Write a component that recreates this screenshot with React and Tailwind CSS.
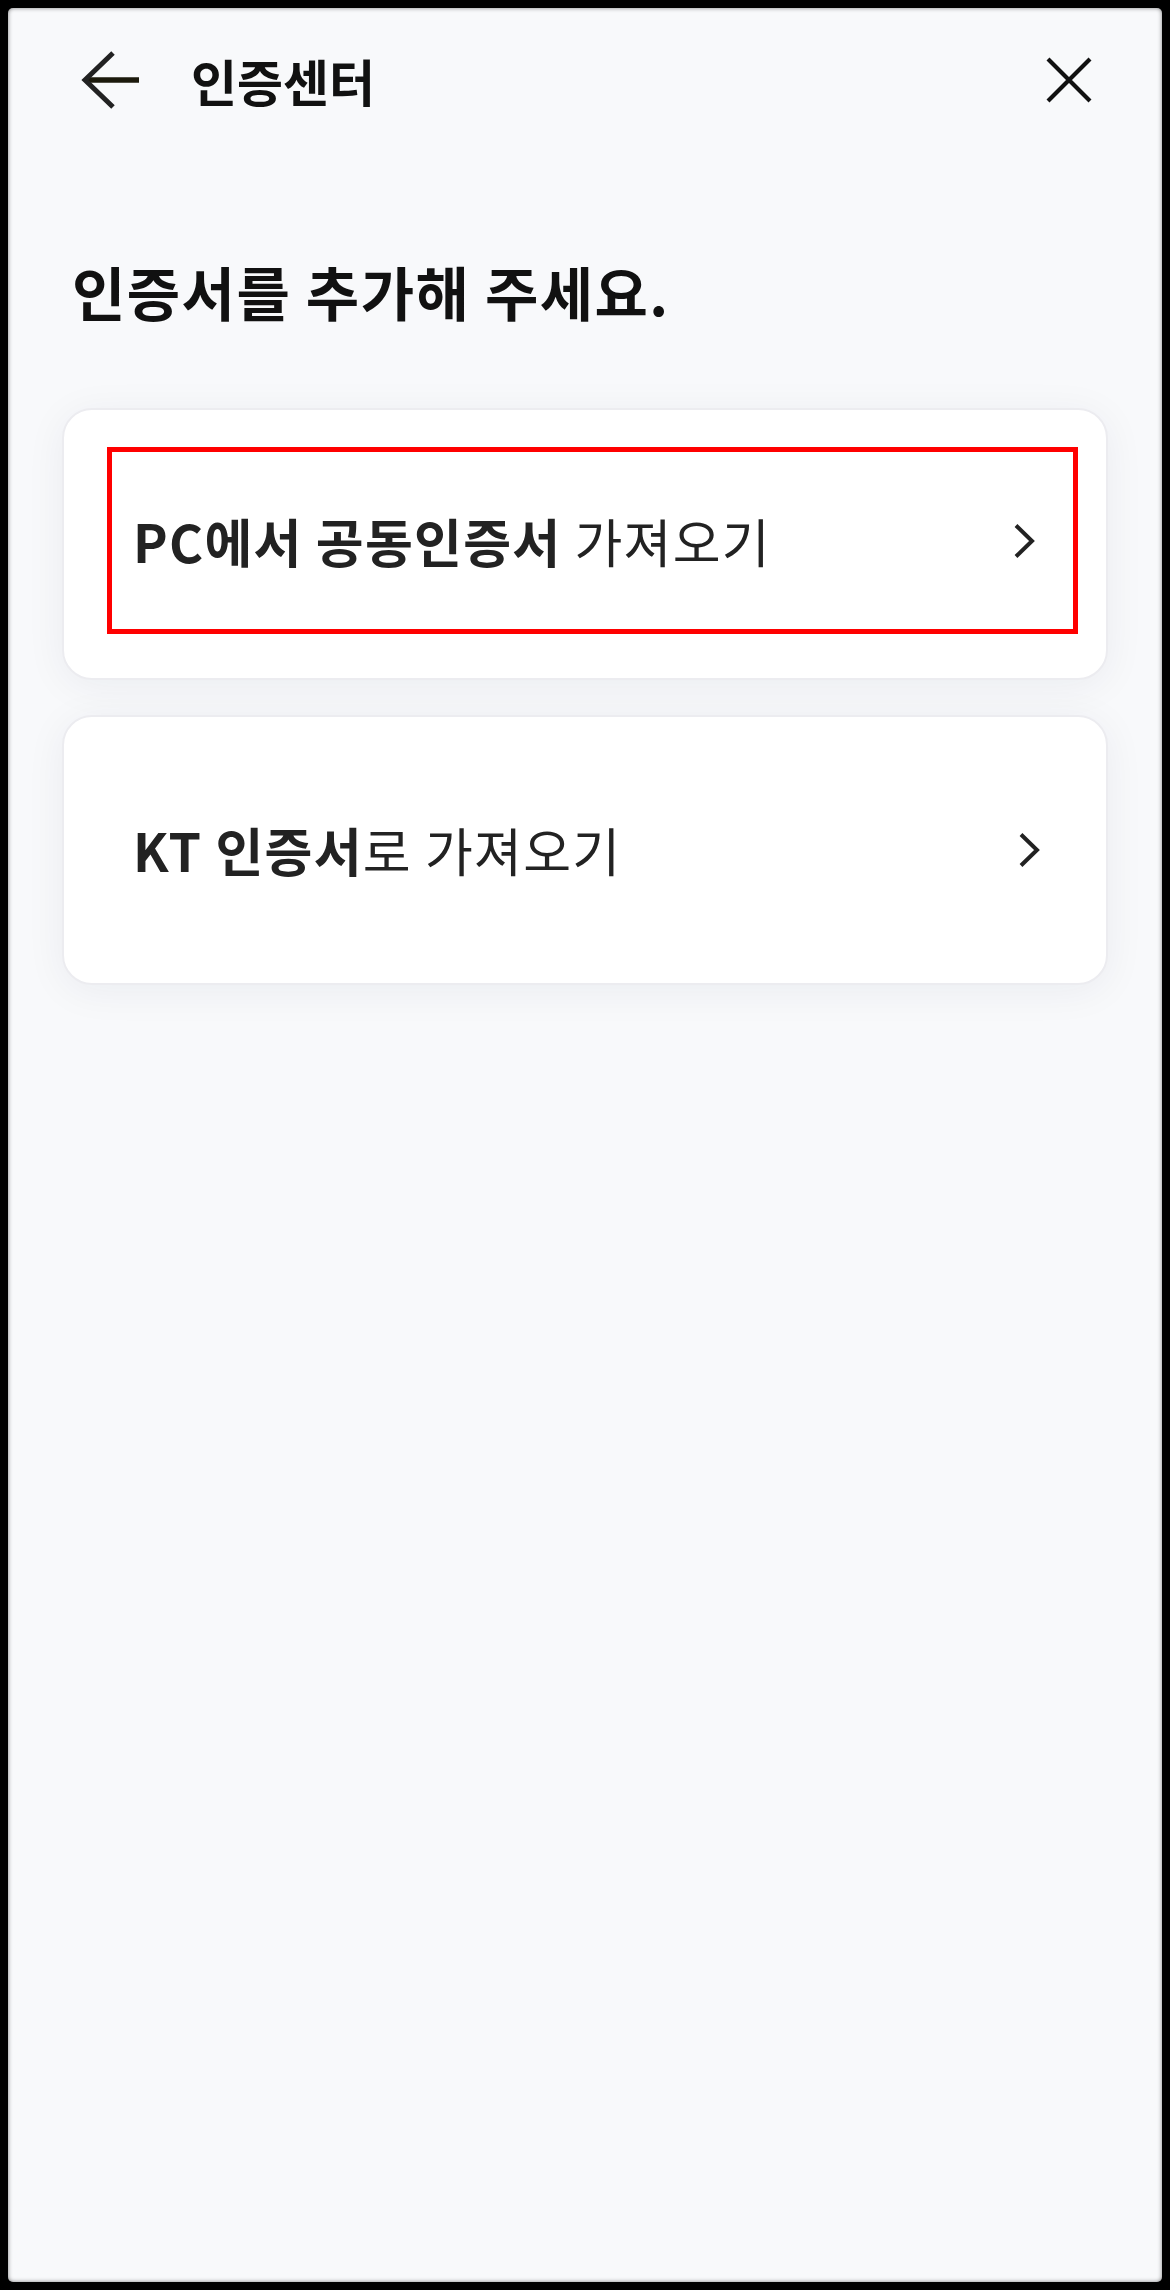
import React from "react";

const FONT = { fontFamily: '"Noto Sans CJK KR", "Noto Sans", sans-serif' };

function BackIcon() {
  return (
    <svg width="60" height="60" viewBox="0 0 60 60" fill="none">
      <path d="M58 30H4" stroke="#1c1a0c" strokeWidth="5.5" />
      <path d="M32 3L4 30L32 57" stroke="#222" strokeWidth="5" />
    </svg>
  );
}

function CloseIcon() {
  return (
    <svg width="48" height="48" viewBox="0 0 48 48" fill="none">
      <path d="M3 3L45 45M45 3L3 45" stroke="#111" strokeWidth="4.2" />
    </svg>
  );
}

function Chevron() {
  return (
    <svg width="24" height="36" viewBox="0 0 24 36" fill="none">
      <path d="M4 2.5L20 18L4 33.5" stroke="#222" strokeWidth="4" />
    </svg>
  );
}

// 인증서 추가 카드
function CertCard({ children, highlight }) {
  if (highlight) {
    return (
      <div className="bg-white rounded-[30px] border-2 border-[#ececf0] shadow-[0_6px_40px_rgba(20,30,60,0.06)] pt-[37px] pb-[44px] pl-[43px] pr-[28px]">
        <div className="h-[187px] border-[5px] border-[#ff0000] flex items-center justify-between pl-[21px] pr-[37px]">
          <div className="text-[52px] leading-none text-[#222] tracking-[0.025em]">{children}</div>
          <Chevron />
        </div>
      </div>
    );
  }
  return (
    <div className="bg-white rounded-[30px] border-2 border-[#ececf0] shadow-[0_6px_40px_rgba(20,30,60,0.06)] h-[270px] flex items-center justify-between pl-[69px] pr-[65px]">
      <div className="text-[52px] leading-none text-[#222] tracking-[0.025em]">{children}</div>
      <Chevron />
    </div>
  );
}

export default function App() {
  return (
    <div className="w-[1170px] h-[2290px] bg-black p-[8px]" style={FONT}>
      <div className="h-full bg-[#f8f9fb] rounded-[5px] shadow-[inset_0_0_4px_rgba(0,0,0,0.5)] flex flex-col">
        {/* 헤더 */}
        <div className="h-[144px] flex items-center pl-[73px] pr-[69px]">
          <BackIcon />
          <div className="ml-[50px] text-[50px] font-bold text-[#111] leading-none">인증센터</div>
          <div className="ml-auto">
            <CloseIcon />
          </div>
        </div>

        <h1 className="mt-[106px] pl-[64px] text-[58px] font-bold text-[#111] leading-[66px] tracking-[0.025em]">
          인증서를 추가해 주세요.
        </h1>

        <div className="mt-[84px] px-[54px] flex flex-col gap-[35px]">
          <CertCard highlight>
            <span className="font-bold">PC에서 공동인증서</span> 가져오기
          </CertCard>
          <CertCard>
            <span className="font-bold">KT 인증서</span>로 가져오기
          </CertCard>
        </div>
      </div>
    </div>
  );
}
